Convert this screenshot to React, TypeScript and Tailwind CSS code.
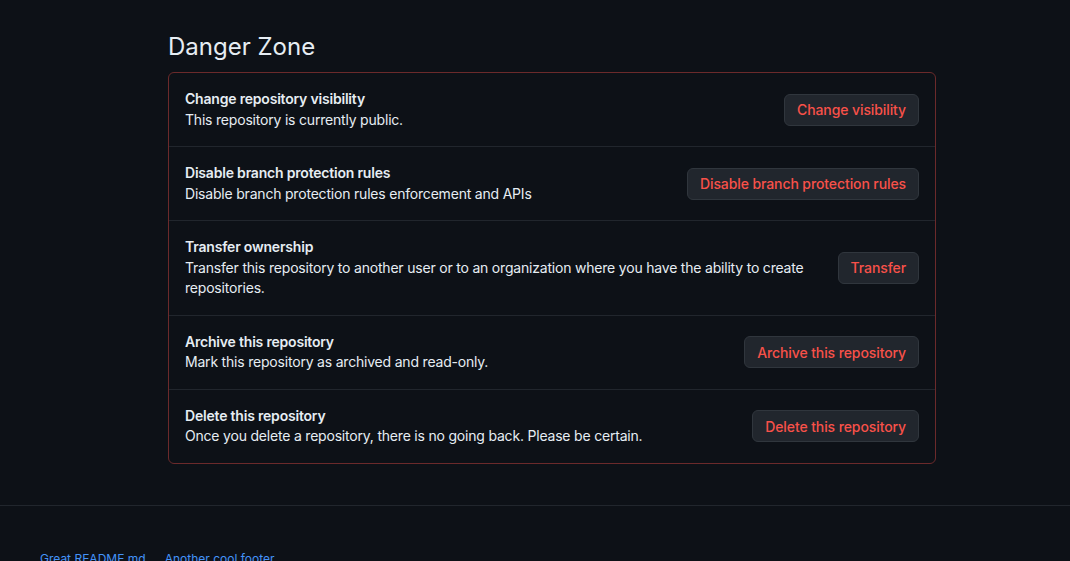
const rows = [
  {
    title: 'Change repository visibility',
    desc: 'This repository is currently public.',
    action: 'Change visibility',
  },
  {
    title: 'Disable branch protection rules',
    desc: 'Disable branch protection rules enforcement and APIs',
    action: 'Disable branch protection rules',
  },
  {
    title: 'Transfer ownership',
    desc: 'Transfer this repository to another user or to an organization where you have the ability to create repositories.',
    action: 'Transfer',
  },
  {
    title: 'Archive this repository',
    desc: 'Mark this repository as archived and read-only.',
    action: 'Archive this repository',
  },
  {
    title: 'Delete this repository',
    desc: 'Once you delete a repository, there is no going back. Please be certain.',
    action: 'Delete this repository',
  },
];

export default function App() {
  return (
    <div className="min-h-[561px] bg-[#0d1117] font-['Inter','Liberation_Sans',sans-serif] text-[#e6edf3]">
      {/* Danger zone */}
      <div className="ml-[168px] w-[768px] pt-[29px]">
        <h2 className="mb-[7px] text-[24px] leading-[36px] font-normal">Danger Zone</h2>
        <div className="rounded-md border border-[#6b2a2b]">
          {rows.map((r, i) => (
            <div
              key={r.title}
              className={`flex items-center px-4 py-4 ${i > 0 ? 'border-t border-[#21262d]' : ''}`}
            >
              <div className="mr-4 flex-1 text-[14px] leading-[20.5px] tracking-[-0.2px]">
                <div className="font-semibold">{r.title}</div>
                <div>{r.desc}</div>
              </div>
              <button className="h-8 shrink-0 rounded-md border border-[#30363d] bg-[#21262d] px-3 text-[14px] font-medium tracking-[-0.1px] text-[#f85149]">
                {r.action}
              </button>
            </div>
          ))}
        </div>
      </div>

      {/* Footer */}
      <div className="mt-[41px] border-t border-[#21262d] pt-[44px]">
        <div className="flex gap-[19px] pl-[40px] text-[12px] leading-[18px] text-[#4493f8]">
          <a>Great README.md</a>
          <a>Another cool footer</a>
        </div>
      </div>
    </div>
  );
}
